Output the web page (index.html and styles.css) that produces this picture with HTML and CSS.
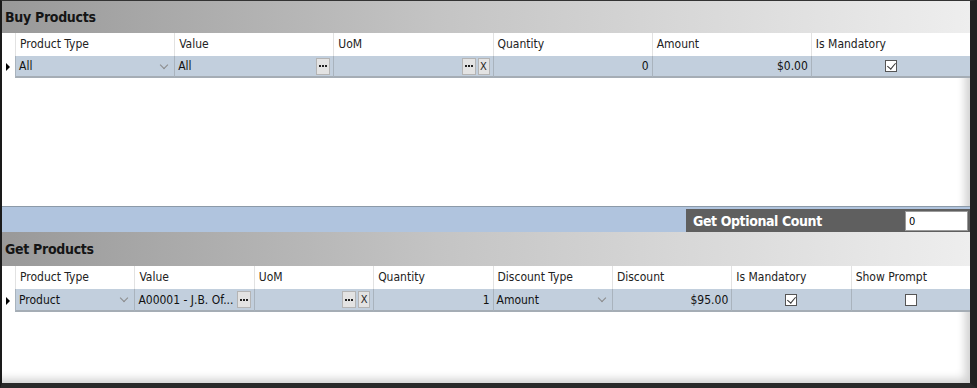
FILE: index.html
```html
<!DOCTYPE html>
<html lang="en">

<head>
    <meta charset="utf-8">
    <meta name="viewport" content="width=device-width, initial-scale=1.0">
    <title>Products</title>
    <link rel="stylesheet" href="styles.css">
</head>

<body>
    <div class="frame">
        <h2 class="band">Buy Products</h2>
        <div class="grid buy">
            <div class="head sel"></div>
            <div class="head">Product Type</div>
            <div class="head">Value</div>
            <div class="head">UoM</div>
            <div class="head">Quantity</div>
            <div class="head">Amount</div>
            <div class="head">Is Mandatory</div>

            <div class="cell sel"><span class="arrow"></span></div>
            <div class="cell combo">All<span class="chev"></span></div>
            <div class="cell">All<span class="btns"><span class="btn"><svg width="8" height="2" viewBox="0 0 8 2"><rect x="0" width="2" height="2"/><rect x="3" width="2" height="2"/><rect x="6" width="2" height="2"/></svg></span></span></div>
            <div class="cell"><span class="btns"><span class="btn"><svg width="8" height="2" viewBox="0 0 8 2"><rect x="0" width="2" height="2"/><rect x="3" width="2" height="2"/><rect x="6" width="2" height="2"/></svg></span><span class="btn x">X</span></span></div>
            <div class="cell num">0</div>
            <div class="cell num">$0.00</div>
            <div class="cell mid"><span class="check on"></span></div>
        </div>
        <div class="space top"></div>

        <div class="bar">
            <div class="optional">
                <span>Get Optional Count</span>
                <input class="count" type="text" value="0">
            </div>
        </div>

        <h2 class="band tall">Get Products</h2>
        <div class="grid get">
            <div class="head sel"></div>
            <div class="head">Product Type</div>
            <div class="head">Value</div>
            <div class="head">UoM</div>
            <div class="head">Quantity</div>
            <div class="head">Discount Type</div>
            <div class="head">Discount</div>
            <div class="head">Is Mandatory</div>
            <div class="head">Show Prompt</div>

            <div class="cell sel"><span class="arrow"></span></div>
            <div class="cell combo">Product<span class="chev"></span></div>
            <div class="cell">A00001 - J.B. Of...<span class="btns"><span class="btn"><svg width="8" height="2" viewBox="0 0 8 2"><rect x="0" width="2" height="2"/><rect x="3" width="2" height="2"/><rect x="6" width="2" height="2"/></svg></span></span></div>
            <div class="cell"><span class="btns"><span class="btn"><svg width="8" height="2" viewBox="0 0 8 2"><rect x="0" width="2" height="2"/><rect x="3" width="2" height="2"/><rect x="6" width="2" height="2"/></svg></span><span class="btn x">X</span></span></div>
            <div class="cell num">1</div>
            <div class="cell combo">Amount<span class="chev"></span></div>
            <div class="cell num">$95.00</div>
            <div class="cell mid"><span class="check on"></span></div>
            <div class="cell mid"><span class="check"></span></div>
        </div>
        <div class="space"></div>
    </div>
</body>

</html>
```

FILE: styles.css
```css
* {
    box-sizing: border-box;
}

body {
    margin: 0;
    background: #fff;
    font-family: "DejaVu Sans Condensed", "DejaVu Sans", sans-serif;
    font-size: 12px;
    color: #111;
}

.frame {
    width: 977px;
    height: 388px;
    display: flex;
    flex-direction: column;
    border-left: 2px solid #1a1a1a;
    border-top: 1px solid #333;
    border-right: 7px solid #222;
    border-bottom: 5px solid #2a2a2a;
    box-shadow: inset -9px -8px 8px -4px rgba(0, 0, 0, 0.18);
}

.band {
    margin: 0;
    height: 32px;
    flex: none;
    padding-left: 3px;
    display: flex;
    align-items: center;
    font-size: 14px;
    letter-spacing: -0.3px;
    font-weight: bold;
    color: #151515;
    background: linear-gradient(to right, #999 0%, #c4c4c4 45%, #eee 100%);
}

.band.tall {
    height: 34px;
}

.grid {
    display: grid;
    flex: none;
    padding-left: 1px;
}

.buy {
    grid-template-columns: 12px repeat(6, 1fr);
}

.get {
    grid-template-columns: 12px repeat(8, 1fr);
}

.head {
    height: 23px;
    padding: 4px 4px 0;
    background: #fff;
    border-left: 1px solid #e2e2e2;
    color: #222;
    white-space: nowrap;
}

.head.sel {
    border-left: none;
}

.cell {
    height: 22px;
    display: flex;
    align-items: center;
    padding: 0 3px;
    background: #c2cfdd;
    border-left: 1px solid #a9b3bd;
    border-bottom: 2px solid #a5adb5;
    white-space: nowrap;
}

.get .cell {
    height: 23px;
}

.cell.sel {
    background: #fff;
    border-left: none;
    border-bottom: none;
    padding: 0 0 0 3px;
}

.arrow {
    width: 0;
    height: 0;
    border-top: 4px solid transparent;
    border-bottom: 4px solid transparent;
    border-left: 4px solid #000;
}

.num {
    justify-content: flex-end;
}

.mid {
    justify-content: center;
}

.combo {
    justify-content: space-between;
}

.chev {
    width: 6px;
    height: 6px;
    margin-right: 4px;
    margin-bottom: 3px;
    border-right: 1px solid #8a8a8a;
    border-bottom: 1px solid #8a8a8a;
    transform: rotate(45deg);
}

.btns {
    margin-left: auto;
    display: flex;
    gap: 2px;
}

.btn {
    width: 14px;
    height: 17px;
    display: flex;
    align-items: center;
    justify-content: center;
    background: #e3e3e3;
    border: 1px solid #b4b4b4;
    color: #222;
}

.btn svg {
    fill: #222;
}

.btn.x {
    width: 12px;
    font-size: 11px;
}

.check {
    width: 12px;
    height: 12px;
    background: #fff;
    border: 1px solid #555;
    position: relative;
}

.check.on::after {
    content: "";
    position: absolute;
    left: 3px;
    top: 0;
    width: 4px;
    height: 7px;
    border-right: 1px solid #333;
    border-bottom: 1px solid #333;
    transform: rotate(40deg);
}

.space {
    flex: 1;
}

.space.top {
    flex: none;
    height: 129px;
    border-bottom: 1px solid #8c9aa8;
}

.bar {
    height: 25px;
    flex: none;
    background: #b0c4de;
    display: flex;
    justify-content: flex-end;
    align-items: flex-end;
}

.optional {
    width: 284px;
    height: 23px;
    display: flex;
    align-items: center;
    justify-content: space-between;
    padding: 0 2px 0 7px;
    background: #5f5f5f;
    color: #fff;
    font-size: 14px;
    letter-spacing: -0.4px;
    font-weight: bold;
}

.count {
    width: 63px;
    height: 20px;
    border: 1px solid #9a9a9a;
    padding: 2px 3px 0;
    font-family: inherit;
    font-size: 11px;
    letter-spacing: 0;
    color: #000;
}
```
